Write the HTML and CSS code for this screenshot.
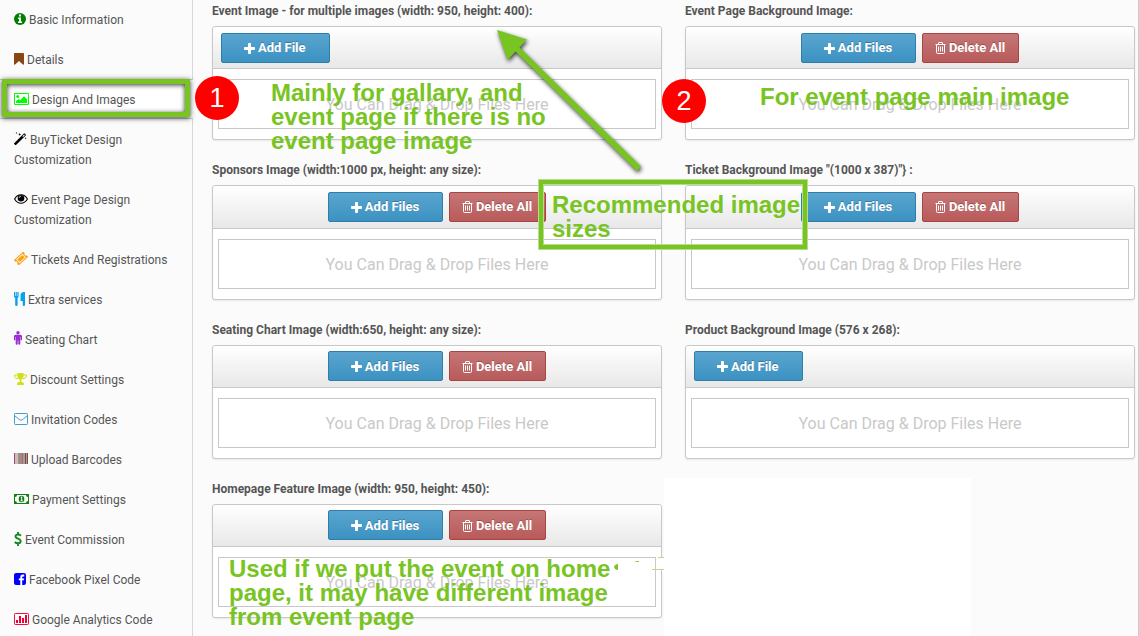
FILE: index.html
```html
<!DOCTYPE html>
<html lang="en">
<head>
<meta charset="utf-8">
<title>Design And Images</title>
<link rel="stylesheet" href="styles.css">
</head>
<body>
<svg class="defs" width="0" height="0">
  <symbol id="plus" viewBox="0 0 11 11"><path d="M4 .8q0-.8.8-.8h1.400q.8 0 .8.8V4h3.200q.8 0 .8.8v1.400q0 .8-.8.8H7v3.200q0 .8-.8.8H4.800q-.8 0-.8-.8V7H.8Q0 7 0 6.200V4.800Q0 4 .8 4H4z"/></symbol>
  <symbol id="trash" viewBox="0 0 11 12"><path fill="none" stroke="currentColor" d="M.5 2.500h10M3.500 2V1q0-.5.500-.5h3q.5 0 .5.5v1M1.500 3v7.500q0 1 1 1h6q1 0 1-1V3M3.500 4.500v5M5.500 4.500v5M7.500 4.500v5"/></symbol>
</svg>
<div class="page">
  <nav class="side">
    <a class="item"><svg width="12" height="12" viewBox="0 0 12 12" fill="#008000"><circle cx="6" cy="6" r="6"/><path fill="#fff" d="M5 1.500h2v2H5zM4 4.500h3V8.500h1V10H4V8.500h1V6H4z"/></svg><span>Basic Information</span></a>
    <a class="item"><svg width="10" height="12" viewBox="0 0 10 12" fill="#8b4513"><path d="M.8 0h8.400q.8 0 .8.800v10.300q0 .9-.9.700L5 8 .9 11.800Q0 12 0 11.100V.8Q0 0 .8 0z"/></svg><span>Details</span></a>
    <a class="item active"><svg width="15" height="12" viewBox="0 0 15 12" fill="#0f0"><path fill-rule="evenodd" d="M1 0h13q1 0 1 1v10q0 1-1 1H1q-1 0-1-1V1q0-1 1-1zM1 1v10h13V1z"/><circle cx="3.700" cy="3.500" r="1.500"/><path d="M2 10V8.200L4.500 6 6 7.300 10 3.300 13 6.300V10z"/></svg><span>Design And Images</span></a>
    <a class="item"><svg width="13" height="13" viewBox="0 0 13 13"><path fill-rule="evenodd" d="M.2 11.300 9.900 1.600q.5-.4.900 0l.9.900q.4.400 0 .9L2 13q-.4.300-.8 0l-1-.9q-.4-.4 0-.8zM8.300 4.300l.8.800 1.800-1.800-.8-.8z"/><path d="m2.500 0 .3.800.8.200-.8.300-.3.800-.3-.8L1.500 1l.7-.2zM5.700.7l.4 1.200 1.300.4-1.300.4-.4 1.200-.4-1.200L4 2.300l1.300-.4zM11.700 5l.3.900.8.300-.8.300-.3.800-.3-.8-.8-.3.800-.3z"/></svg><span>BuyTicket Design Customization</span></a>
    <a class="item"><svg width="14" height="12" viewBox="0 0 14 12"><path fill="none" stroke="#000" stroke-width="1.100" d="M.6 6Q3 1.800 7 1.800T13.400 6Q11 10.200 7 10.200T.6 6z"/><circle cx="7" cy="5.200" r="3.300"/><path fill="none" stroke="#fff" stroke-width=".7" d="M5.200 5Q5.200 3.300 7 3.300"/></svg><span>Event Page Design Customization</span></a>
    <a class="item"><svg width="14" height="13" viewBox="0 0 14 13"><g transform="translate(7 6.500) rotate(-42)"><path fill="#ffa010" fill-rule="evenodd" d="M-6.400-3.600H6.400V-1.300a1.300 1.300 0 0 0 0 2.600V3.600H-6.400V1.300a1.300 1.300 0 0 0 0-2.600zM-4.200-2.600V2.600H4.200V-2.600z"/><path fill="#ffa010" d="M-3.400-1.800h6.800v3.600h-6.800z"/></g></svg><span>Tickets And Registrations</span></a>
    <a class="item"><svg class="low" width="11" height="14" viewBox="0 0 11 14" fill="#03a3ee"><path d="M0 0h1v4h.6V0h1.200v4h.6V0h1.200v4.300q0 1.300-1 1.700V13q0 1-1.200 1T1.200 13V6Q0 5.500 0 4.300zM11 0v13q0 1-1.100 1T8.700 13V9H6.500V3.500Q6.500 0 10 0z"/></svg><span>Extra services</span></a>
    <a class="item"><svg width="8" height="14" viewBox="0 0 8 14" fill="#9b30cf"><circle cx="4" cy="1.800" r="1.700"/><path d="M1.500 3.800h5Q8 3.800 8 5.300v3.400q0 .6-.6.600t-.7-.6V6h-.4v7q0 .8-.9.800T4.300 13V9.500h-.6V13q0 .8-1 .8t-1-.8V6h-.4v2.700q0 .6-.7.600T0 8.700V5.300q0-1.500 1.500-1.500z"/></svg><span>Seating Chart</span></a>
    <a class="item"><svg width="13" height="12" viewBox="0 0 13 12" fill="#d2de18"><path fill="none" stroke="#d2de18" d="M3.500 2H.5v1.200Q1 5.600 4 5.800M9.500 2h3v1.200Q12 5.600 9 5.800"/><path d="M3.200 1.200Q3.200 0 4.200 0h4.600q1 0 1 1.200 0 4-2.600 5.600v1.500q.2.900 2 1.100.7.300.7 1.300V12H3.100v-1.300q0-1 .7-1.300 1.800-.2 2-1.100V6.800Q3.200 5.200 3.200 1.200z"/></svg><span>Discount Settings</span></a>
    <a class="item"><svg width="14" height="12" viewBox="0 0 14 12"><path fill="none" stroke="#4a9cc8" d="M1.200.5h11.600q.7 0 .7.700v9.600q0 .7-.7.700H1.200q-.7 0-.7-.7V1.200q0-.7.700-.7zM.7 2.700 5.300 6.500Q7 8 8.700 6.500L13.300 2.700"/></svg><span>Invitation Codes</span></a>
    <a class="item"><svg class="high" width="14" height="11" viewBox="0 0 14 11"><path fill="#9b4a86" d="M0 0h1v11H0z"/><path fill="#d8b8b4" d="M1 0h3v11H1z"/><path fill="#79a49c" d="M4 0h1v11H4z"/><path fill="#ad8585" d="M5 0h3v11H5z"/><path fill="#817e79" d="M8 0h1v11H8z"/><path fill="#b49882" d="M9 0h2v11H9z"/><path fill="#774c62" d="M11 0h1v11h-1zM13 0h1v11h-1z"/><path fill="#a98" d="M12 0h1v11h-1z"/></svg><span>Upload Barcodes</span></a>
    <a class="item"><svg class="high" width="15" height="10" viewBox="0 0 15 10"><path fill="#108010" fill-rule="evenodd" d="M0 0h15v10H0zM3 1Q3 3 1 3v4q2 0 2 2h9q0-2 2-2V3q-2 0-2-2z"/><ellipse cx="7.500" cy="5" rx="2.800" ry="3.200" fill="#108010"/><path fill="#fff" d="M6.300 3.300 7.400 2.500H8.200V6.500H9v.8H6.300v-.8h.9V3.800z"/></svg><span>Payment Settings</span></a>
    <a class="item"><svg class="low" width="8" height="14" viewBox="0 0 8 14"><path fill="none" stroke="#108a20" stroke-width="1.900" d="M7 3.600Q5.800 2.500 4 2.500 1.500 2.500 1.500 4.300 1.500 5.800 4 6.600 6.700 7.500 6.700 9.300 6.700 11.300 4 11.300 2 11.300.8 10M4 0v2.500M4 11.500V14"/></svg><span>Event Commission</span></a>
    <a class="item"><svg width="12" height="12" viewBox="0 0 12 12"><rect width="12" height="12" rx="2" fill="#00f"/><path fill="#fff" d="M6.300 12V7.200H4.800V5.400h1.500V4Q6.300 1.600 8.700 1.600h1.500v1.800h-1Q8.200 3.400 8.200 4.300v1.100h2L9.900 7.200H8.200V12z"/></svg><span>Facebook Pixel Code</span></a>
    <a class="item"><svg width="15" height="12" viewBox="0 0 15 12"><rect x=".5" y=".5" width="14" height="11" rx=".8" fill="none" stroke="#f01040"/><path fill="#f00030" d="M2 7h2v3H2zM5 3h2v7H5zM8 5h2v5H8zM11 2h2v8h-2z"/></svg><span>Google Analytics Code</span></a>
  </nav>
  <main class="grid">
    <section class="cell"><h4>Event Image - for multiple images (width: 950, height: 400):</h4>
      <div class="panel"><div class="bar left"><button class="btn single"><svg width="11" height="11"><use href="#plus"/></svg>Add File</button></div><div class="drop">You Can Drag &amp; Drop Files Here</div></div></section>
    <section class="cell"><h4>Event Page Background Image:</h4>
      <div class="panel"><div class="bar"><button class="btn"><svg width="11" height="11"><use href="#plus"/></svg>Add Files</button><button class="btn del"><svg width="11" height="12"><use href="#trash"/></svg>Delete All</button></div><div class="drop">You Can Drag &amp; Drop Files Here</div></div></section>
    <section class="cell"><h4>Sponsors Image (width:1000 px, height: any size):</h4>
      <div class="panel"><div class="bar"><button class="btn"><svg width="11" height="11"><use href="#plus"/></svg>Add Files</button><button class="btn del"><svg width="11" height="12"><use href="#trash"/></svg>Delete All</button></div><div class="drop">You Can Drag &amp; Drop Files Here</div></div></section>
    <section class="cell"><h4>Ticket Background Image "(1000 x 387)"} :</h4>
      <div class="panel"><div class="bar"><button class="btn"><svg width="11" height="11"><use href="#plus"/></svg>Add Files</button><button class="btn del"><svg width="11" height="12"><use href="#trash"/></svg>Delete All</button></div><div class="drop">You Can Drag &amp; Drop Files Here</div></div></section>
    <section class="cell"><h4>Seating Chart Image (width:650, height: any size):</h4>
      <div class="panel"><div class="bar"><button class="btn"><svg width="11" height="11"><use href="#plus"/></svg>Add Files</button><button class="btn del"><svg width="11" height="12"><use href="#trash"/></svg>Delete All</button></div><div class="drop">You Can Drag &amp; Drop Files Here</div></div></section>
    <section class="cell"><h4>Product Background Image (576 x 268):</h4>
      <div class="panel"><div class="bar left"><button class="btn single"><svg width="11" height="11"><use href="#plus"/></svg>Add File</button></div><div class="drop">You Can Drag &amp; Drop Files Here</div></div></section>
    <section class="cell"><h4>Homepage Feature Image (width: 950, height: 450):</h4>
      <div class="panel"><div class="bar"><button class="btn"><svg width="11" height="11"><use href="#plus"/></svg>Add Files</button><button class="btn del"><svg width="11" height="12"><use href="#trash"/></svg>Delete All</button></div><div class="drop">You Can Drag &amp; Drop Files Here</div></div></section>
  </main>
  <div class="blank"></div>
  <div class="frame"></div>
  <div class="size-frame"></div>
  <svg class="arrow" width="1139" height="636" viewBox="0 0 1139 636">
    <g fill="#78c423"><path d="M497 30 527 39.500 519.500 47.500 641 166.500 637 171 515.500 51.500 507.500 60z"/></g>
  </svg>
  <svg class="scraps" width="50" height="20" viewBox="0 0 50 20"><path fill="#fff" d="M42 0h8v16h-8z"/><path fill="#cacaca" d="M41 13h1v3h-1zM47 13h1v3h-1z"/><path fill="#78c423" d="M0 10q1-3 4-3v6q-3 0-4-3zM20 5q2-1 5-1v1z"/><path fill="#b7dd8c" d="M44 0h6v1h-6zM38 12h12v1H38z"/></svg>
  <div class="num n1">1</div>
  <div class="num n2">2</div>
  <p class="note a">Mainly for gallary, and<br>event page if there is no<br>event page image</p>
  <p class="note b">For event page main image</p>
  <p class="note c">Recommended image<br>sizes</p>
  <p class="note d">Used if we put the event on home<br>page, it may have different image<br>from event page</p>
</div>
</body>
</html>
```
FILE: styles.css
```css
* { box-sizing: border-box; }
body { margin: 0; background: #fbfbfb; font: 12px/20px Roboto, sans-serif; color: #555; }
.defs { position: absolute; }
.page { position: relative; display: flex; width: 1139px; height: 636px; overflow: hidden; border-right: 1px solid #ccc; }
.side { width: 193px; flex: none; border-right: 1px solid #d8d8d8; height: 640px; margin-top: -1px; }
.item { display: block; padding: 11px 14px 9px; }
.item svg { display: inline-block; vertical-align: -1px; margin-right: 3px; }
.item svg.low { vertical-align: -2px; }
.item svg.high { vertical-align: 0; }
.item.active { background: #fff; border: solid #ccc; border-width: 1px 0; padding: 10px 14px 8px; margin-right: -1px; }
.grid { display: grid; grid-template-columns: 450px 450px; column-gap: 23px; grid-auto-rows: 159.3px; padding-left: 19px; align-content: start; }
h4 { margin: 0; height: 26px; font-size: 12px; line-height: 22px; font-weight: 700; white-space: nowrap; }
.panel { height: 114.3px; border: 1px solid #c8c8c8; border-radius: 3px; background: #fff; box-shadow: 0 1px 2px rgba(0,0,0,.08); }
.bar { height: 42.3px; display: flex; justify-content: center; gap: 6px; padding-top: 5.55px; background: linear-gradient(#fff, #e8e8e8); border-bottom: 1px solid #c8c8c8; border-radius: 3px 3px 0 0; }
.bar.left { justify-content: flex-start; padding-left: 8px; }
.btn { width: 115px; height: 30px; padding: 1px 1px 0 0; display: flex; align-items: center; justify-content: center; gap: 3px; border: 1px solid #2f7ea8; border-radius: 2px; background: linear-gradient(#59a5cf, #3c92c2); color: #fff; font: 700 13px/20px Roboto, sans-serif; text-shadow: 0 -1px 0 rgba(0,0,0,.25); }
.btn svg { fill: currentColor; }
.btn.single { width: 108.5px; }
.btn.del { width: 97px; border-color: #a94442; background: linear-gradient(#c67676, #b85a5a); }
.drop { margin: 10px 5px 0; height: 50px; border: 1px solid #c8c8c8; color: #c9c9c9; font-size: 16px; line-height: 49px; text-align: center; }
.blank { position: absolute; left: 664px; top: 478px; width: 307px; height: 158px; background: #fff; }
.frame { position: absolute; left: 2px; top: 79px; width: 188px; height: 38px; border: 5px solid #78c423; box-shadow: 0 1px 5px rgba(0,0,0,.8), inset 0 1px 5px rgba(0,0,0,.8); }
.size-frame { position: absolute; left: 539px; top: 180px; width: 268px; height: 69px; border: 4px solid #78c423; outline: 1px solid #b7dd8c; box-shadow: inset 0 0 0 1px #b7dd8c; }
.arrow { position: absolute; left: 0; top: 0; filter: drop-shadow(1px 2px 2px rgba(0,0,0,.75)); }
.scraps { position: absolute; left: 614px; top: 557px; }
.num { position: absolute; width: 44px; height: 44px; border-radius: 50%; background: #f00; color: #fff; font: 27px/44px "Liberation Sans", Arial, sans-serif; text-align: center; }
.n1 { left: 195px; top: 76px; }
.n2 { left: 662px; top: 79px; }
.note { position: absolute; margin: 0; color: #78c423; font: bold 24px/24px "Liberation Sans", Arial, sans-serif; white-space: nowrap; }
.a { left: 271px; top: 81px; }
.b { left: 760px; top: 85px; }
.c { left: 552px; top: 193px; }
.d { left: 229px; top: 557px; }
```
